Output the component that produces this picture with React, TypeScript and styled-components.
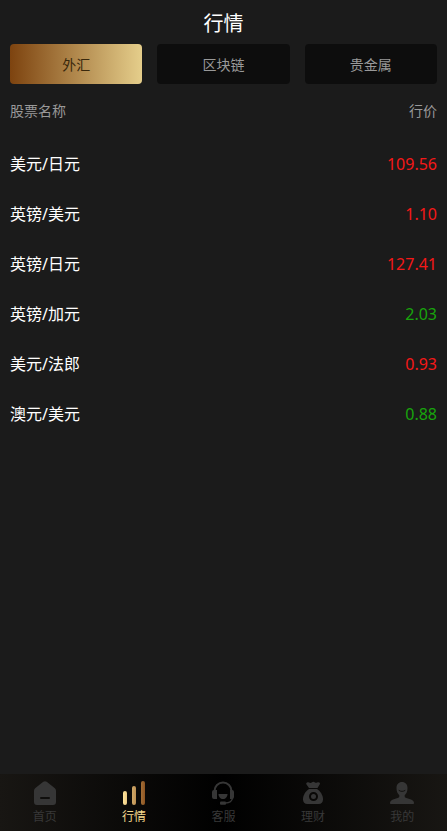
import React, { useState } from "react";
import styled, { createGlobalStyle } from "styled-components";

const GlobalStyle = createGlobalStyle`
  * { box-sizing: border-box; }
  body {
    margin: 0;
    background: #1b1b1b;
    color: #fff;
    font-family: "Noto Sans", "Noto Sans CJK SC", sans-serif;
  }
`;

const Page = styled.div`
  display: flex;
  flex-direction: column;
  min-height: 100vh;
`;

const Title = styled.h1`
  margin: 0;
  padding-top: 4px;
  font-size: 20px;
  font-weight: 400;
  line-height: 40px;
  text-align: center;
`;

const Main = styled.main`
  flex: 1;
  padding: 0 10px;
`;

const Tabs = styled.div`
  display: grid;
  grid-template-columns: repeat(3, 1fr);
  gap: 15px;
`;

const Tab = styled.button<{ $active: boolean }>`
  height: 40px;
  padding: 2px 0 0;
  border: 0;
  border-radius: 4px;
  background: ${(p) => (p.$active ? "linear-gradient(90deg, #7d430f, #e5ce8b)" : "#0d0d0d")};
  color: ${(p) => (p.$active ? "#3a280c" : "#999")};
  font-family: inherit;
  font-size: 14px;
  line-height: 20px;
  cursor: pointer;
`;

const Quotes = styled.table`
  width: 100%;
  border-collapse: collapse;
`;

const HeadCell = styled.th<{ $end?: boolean }>`
  height: 55px;
  padding: 0 0 2px;
  color: #999;
  font-size: 14px;
  font-weight: 400;
  line-height: 20px;
  text-align: ${(p) => (p.$end ? "right" : "left")};
`;

const NameCell = styled.td`
  height: 50px;
  padding: 0;
  font-size: 16px;
  line-height: 24px;
`;

const PriceCell = styled.td<{ $rising: boolean }>`
  padding: 0;
  color: ${(p) => (p.$rising ? "#f51818" : "#18a40c")};
  font-size: 16px;
  line-height: 24px;
  text-align: right;
`;

const TabBar = styled.nav`
  position: sticky;
  bottom: 0;
  display: grid;
  grid-template-columns: repeat(5, 1fr);
  height: 57px;
  padding-top: 7px;
  background: linear-gradient(90deg, #181613, #000 50%, #181613);
`;

const NavLink = styled.a<{ $active: boolean }>`
  display: flex;
  flex-direction: column;
  align-items: center;
  color: ${(p) => (p.$active ? "#f6d98d" : "#383838")};
  font-size: 12px;
  line-height: 24px;
  text-decoration: none;
`;

const Icon = styled.svg`
  display: block;
  width: 24px;
  height: 24px;
  fill: #363636;
`;

const HomeIcon = () => (
  <Icon viewBox="0 0 24 24" aria-hidden="true">
    <path d="M10.3.8a3 3 0 0 1 3.4 0l7.9 6.1A3.5 3.5 0 0 1 23 9.7V21a3 3 0 0 1-3 3H4a3 3 0 0 1-3-3V9.7a3.5 3.5 0 0 1 1.4-2.8z" />
    <path d="M8 17h8" stroke="#100f0d" strokeWidth="2" strokeLinecap="round" />
  </Icon>
);

const MarketIcon = () => (
  <Icon viewBox="0 0 24 24" aria-hidden="true">
    <defs>
      <linearGradient id="bars" gradientUnits="userSpaceOnUse" x1="1" y1="0" x2="23" y2="0">
        <stop offset="0" stopColor="#ffe49a" />
        <stop offset="1" stopColor="#8d5421" />
      </linearGradient>
    </defs>
    <g fill="url(#bars)">
      <rect x="1" y="10" width="4" height="14" rx="2" />
      <rect x="10" y="5" width="4" height="19" rx="2" />
      <rect x="19" y="0" width="4" height="24" rx="2" />
    </g>
  </Icon>
);

const SupportIcon = () => (
  <Icon viewBox="0 0 24 24" aria-hidden="true">
    <path d="M3.5 10a8.5 8.5 0 0 1 17 0" fill="none" stroke="#363636" strokeWidth="2" />
    <path d="M3 9h3v9H3a2 2 0 0 1-2-2v-5a2 2 0 0 1 2-2zM19 9h2a2 2 0 0 1 2 2v5a2 2 0 0 1-2 2h-2z" />
    <path d="M7.5 13h9c0 2.900-1.900 5-4.500 5s-4.500-2.100-4.500-5z" />
    <path d="M21.500 17c-.5 3-3 5-7 5" fill="none" stroke="#363636" strokeWidth="1.500" />
    <rect x="9" y="20.500" width="6" height="3.200" rx="1" />
  </Icon>
);

const WealthIcon = () => (
  <Icon viewBox="0 0 24 24" aria-hidden="true">
    <path d="M8 7 5.500 3.500C4.500 1.700 6.300.6 8 1.500c1 .6 2 .5 2.800-.1 1-.8 2.200-.7 3.200.1.700.5 1.400.4 2.300-.1 1.600-.8 3.300.4 2.500 1.800L16.500 7z" />
    <path d="M8 8h8c3.600 2.300 6 6.400 6 10.300 0 3-1.500 4.700-4.500 4.700h-11C3.500 23 2 21.300 2 18.300 2 14.400 4.400 10.300 8 8z" />
    <circle cx="12.500" cy="15.500" r="3.500" fill="none" stroke="#090806" strokeWidth="2" />
    <circle cx="12.500" cy="15.500" r="1.500" />
  </Icon>
);

const ProfileIcon = () => (
  <Icon viewBox="0 0 24 24" aria-hidden="true">
    <path d="M12 1c3.300 0 5.500 2.400 5.500 6 0 3-.9 5.700-2.800 7.200v1.300c0 .6.400 1 1 1.200l5.300 1.800c2 .7 3 2 3 3.500 0 .7-.4 1-1 1H1c-.6 0-1-.3-1-1 0-1.500 1-2.800 3-3.500l5.300-1.800c.6-.2 1-.6 1-1.200v-1.300C7.400 12.700 6.500 10 6.500 7c0-3.600 2.200-6 5.500-6z" />
    <path d="M9 9.500c1.600 1.200 4.400 1.200 6 0" fill="none" stroke="#12110f" strokeWidth="1" strokeLinecap="round" />
  </Icon>
);

const categories = ["外汇", "区块链", "贵金属"];

const quotes = [
  { name: "美元/日元", price: "109.56", rising: true },
  { name: "英镑/美元", price: "1.10", rising: true },
  { name: "英镑/日元", price: "127.41", rising: true },
  { name: "英镑/加元", price: "2.03", rising: false },
  { name: "美元/法郎", price: "0.93", rising: true },
  { name: "澳元/美元", price: "0.88", rising: false },
];

const navItems = [
  { label: "首页", href: "#home", Glyph: HomeIcon },
  { label: "行情", href: "#market", Glyph: MarketIcon },
  { label: "客服", href: "#support", Glyph: SupportIcon },
  { label: "理财", href: "#wealth", Glyph: WealthIcon },
  { label: "我的", href: "#profile", Glyph: ProfileIcon },
];

export default function App() {
  const [category, setCategory] = useState("外汇");
  return (
    <Page>
      <GlobalStyle />
      <Title>行情</Title>
      <Main>
        <Tabs>
          {categories.map((c) => (
            <Tab key={c} type="button" aria-pressed={c === category} $active={c === category} onClick={() => setCategory(c)}>
              {c}
            </Tab>
          ))}
        </Tabs>
        <Quotes>
          <thead>
            <tr>
              <HeadCell scope="col">股票名称</HeadCell>
              <HeadCell scope="col" $end>行价</HeadCell>
            </tr>
          </thead>
          <tbody>
            {quotes.map((q) => (
              <tr key={q.name}>
                <NameCell>{q.name}</NameCell>
                <PriceCell $rising={q.rising}>{q.price}</PriceCell>
              </tr>
            ))}
          </tbody>
        </Quotes>
      </Main>
      <TabBar>
        {navItems.map(({ label, href, Glyph }) => (
          <NavLink key={label} href={href} $active={label === "行情"} aria-current={label === "行情" ? "page" : undefined}>
            <Glyph />
            {label}
          </NavLink>
        ))}
      </TabBar>
    </Page>
  );
}
